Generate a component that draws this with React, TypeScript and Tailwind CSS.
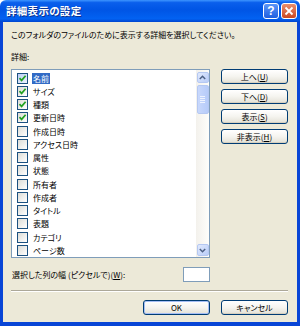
import React from "react";

const items: { label: string; checked: boolean }[] = [
  { label: "名前", checked: true },
  { label: "サイズ", checked: true },
  { label: "種類", checked: true },
  { label: "更新日時", checked: true },
  { label: "作成日時", checked: false },
  { label: "アクセス日時", checked: false },
  { label: "属性", checked: false },
  { label: "状態", checked: false },
  { label: "所有者", checked: false },
  { label: "作成者", checked: false },
  { label: "タイトル", checked: false },
  { label: "表題", checked: false },
  { label: "カテゴリ", checked: false },
  { label: "ページ数", checked: false },
];

function Btn({ children, def }: { children: React.ReactNode; def?: boolean }) {
  return (
    <div
      className={
        "w-[67px] h-[15px] shrink-0 rounded-[3px] border border-[#003C74] bg-gradient-to-b from-white via-[#F5F4EF] to-[#E3E1D6] flex items-center justify-center text-[8px] leading-none text-black " +
        (def ? "shadow-[inset_0_0_0_1px_#A5BEF5]" : "shadow-[inset_0_-1px_0_#D6D0C0]")
      }
    >
      {children}
    </div>
  );
}

function Check({ checked, hot }: { checked: boolean; hot?: boolean }) {
  return (
    <div
      className={
        "w-[11px] h-[11px] shrink-0 border border-[#1C5180] flex items-center justify-center " +
        (hot
          ? "bg-gradient-to-br from-[#B9CDF5] to-[#EEF3FD]"
          : "bg-gradient-to-br from-[#DCDCD6] to-white")
      }
    >
      {checked && (
        <svg width="9" height="9" viewBox="0 0 9 9">
          <path d="M1.5 4.2 L3.6 6.4 L7.6 1.8" stroke="#21A121" strokeWidth="1.7" fill="none" />
        </svg>
      )}
    </div>
  );
}

export default function App() {
  return (
    <div className="w-[300px] h-[326px] bg-white font-['Noto_Sans_CJK_JP',sans-serif] [font-feature-settings:'palt'] select-none">
      <div className="w-[300px] h-[326px] flex flex-col">
        {/* title bar */}
        <div className="h-[22px] shrink-0 rounded-t-[6px] bg-[linear-gradient(to_bottom,#3D95FF_0%,#0A5FEC_12%,#0055E5_45%,#0262F2_85%,#0044CF_100%)] flex items-center pl-[6px] pr-[3px]">
          <span className="text-white font-bold text-[10.5px] leading-none [text-shadow:1px_1px_0_#0B2F8C] tracking-[0.3px]">
            詳細表示の設定
          </span>
          <div className="ml-auto flex gap-[2px]">
            <div className="w-[16px] h-[16px] rounded-[3px] border border-white bg-gradient-to-b from-[#5B95F8] to-[#1E5FE0] flex items-center justify-center text-white font-bold text-[12px] leading-none font-['Liberation_Sans',sans-serif]">
              ?
            </div>
            <div className="w-[16px] h-[16px] rounded-[3px] border border-white bg-gradient-to-b from-[#E98E6C] to-[#C94720] flex items-center justify-center">
              <svg width="10" height="10" viewBox="0 0 10 10">
                <path d="M1.5 1.5 L8.5 8.5 M8.5 1.5 L1.5 8.5" stroke="white" strokeWidth="1.8" />
              </svg>
            </div>
          </div>
        </div>
        {/* body with frame */}
        <div className="flex-1 flex flex-col border-x-[3px] border-b-[4px] border-[#0845D6] bg-[#ECE9D8] pl-[8px] pr-[8px] pt-[8px] text-[8px] leading-[10px] text-black">
          <div className="h-[10px]">このフォルダのファイルのために表示する詳細を選択してください。</div>
          <div className="h-[10px] mt-[12px]">詳細:</div>
          <div className="flex mt-[7px] gap-[11px]">
            {/* listbox */}
            <div className="w-[199px] h-[189px] border border-[#7F9DB9] bg-white flex">
              <div className="flex-1 flex flex-col pt-[1.5px]">
                {items.map((it, i) => (
                  <div key={it.label} className="h-[13.25px] flex items-center pl-[5px]">
                    <Check checked={it.checked} hot={i === 0} />
                    <span
                      className={
                        "ml-[4px] px-[1px] h-[11px] leading-[11px] " +
                        (i === 0 ? "bg-[#316AC5] text-white" : "")
                      }
                    >
                      {it.label}
                    </span>
                  </div>
                ))}
              </div>
              {/* scrollbar */}
              <div className="w-[13px] h-full bg-gradient-to-r from-[#F3F1EC] to-[#FEFEFB] flex flex-col items-center py-[1px]">
                <div className="w-[12px] h-[11px] mt-[1px] rounded-[2px] border border-[#B5C8F2] bg-gradient-to-br from-[#E0E9FD] to-[#B9CDF8] flex items-center justify-center">
                  <svg width="7" height="5" viewBox="0 0 7 5">
                    <path d="M0.8 4 L3.5 1.3 L6.2 4" stroke="#4D6185" strokeWidth="1.5" fill="none" />
                  </svg>
                </div>
                <div className="w-[12px] h-[29px] mt-[2px] rounded-[2px] border border-[#B5C8F2] bg-gradient-to-r from-[#C8D8FC] to-[#B6CBF9] flex flex-col items-center justify-center gap-[1px]">
                  <div className="w-[5px] h-[1px] bg-[#EEF3FE]" />
                  <div className="w-[5px] h-[1px] bg-[#EEF3FE]" />
                  <div className="w-[5px] h-[1px] bg-[#EEF3FE]" />
                  <div className="w-[5px] h-[1px] bg-[#EEF3FE]" />
                </div>
                <div className="flex-1" />
                <div className="w-[12px] h-[12px] rounded-[2px] border border-[#B5C8F2] bg-gradient-to-br from-[#E0E9FD] to-[#B9CDF8] flex items-center justify-center">
                  <svg width="7" height="5" viewBox="0 0 7 5">
                    <path d="M0.8 1 L3.5 3.7 L6.2 1" stroke="#4D6185" strokeWidth="1.5" fill="none" />
                  </svg>
                </div>
              </div>
            </div>
            {/* side buttons */}
            <div className="flex flex-col gap-[5px]">
              <Btn>上へ(<u>U</u>)</Btn>
              <Btn>下へ(<u>D</u>)</Btn>
              <Btn>表示(<u>S</u>)</Btn>
              <Btn>非表示(<u>H</u>)</Btn>
            </div>
          </div>
          {/* width row */}
          <div className="flex items-center mt-[9px] w-[199px]">
            <span className="pl-[1px]">
              選択した列の幅 (ピクセルで)(<u>W</u>):
            </span>
            <div className="ml-auto w-[27px] h-[15px] border border-[#7F9DB9] bg-white" />
          </div>
          {/* separator */}
          <div className="mt-[8px] w-[277px] h-[2px] border-t border-[#ACA899] border-b border-b-white" />
          {/* bottom buttons */}
          <div className="flex justify-end gap-[11px] mt-[8px] w-[277px]">
            <Btn def>OK</Btn>
            <Btn>キャンセル</Btn>
          </div>
        </div>
      </div>
    </div>
  );
}
